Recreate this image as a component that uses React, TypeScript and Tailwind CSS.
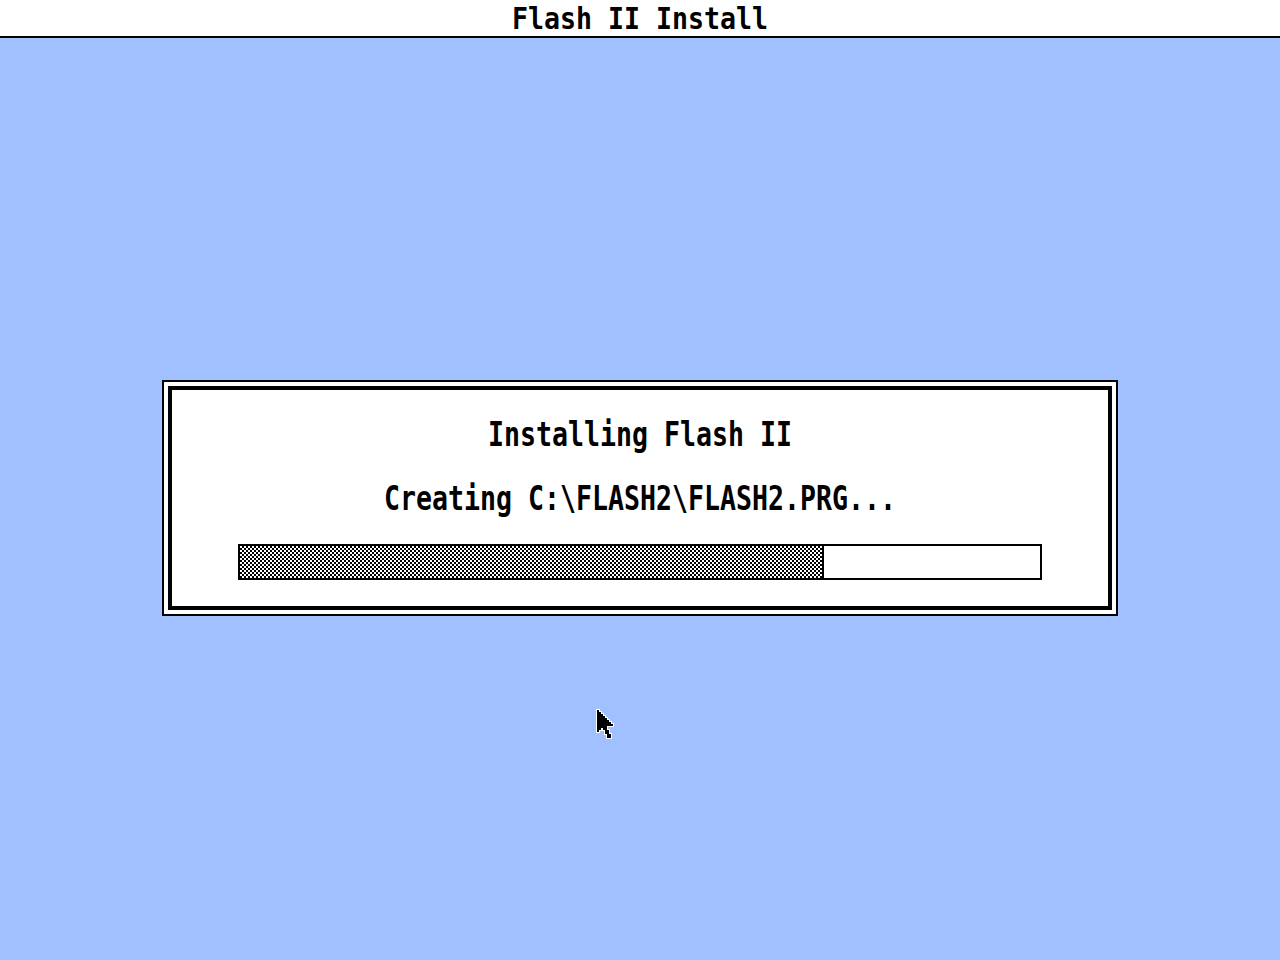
import React from "react";

function Cursor() {
  const cells: [number, number][] = [
    [0, 0], [1, 0], [1, 1], [2, 1], [2, 2], [3, 2], [3, 3], [4, 3], [4, 4], [5, 4], [5, 5], [6, 5], [6, 6], [7, 6], [7, 7], [8, 7], [8, 8],
    [5, 8], [5, 10], [6, 10], [6, 12], [7, 12], [7, 14], [5, 14], [5, 12], [4, 12], [4, 10], [3, 10], [3, 9], [2, 9], [2, 10], [1, 10], [1, 11], [0, 11],
  ];
  const pts = cells.map(([c, r]) => `${3 + 2 * c},${4 + 2 * r}`).join(" ");
  return (
    <svg
      className="absolute left-[594px] top-[706px]"
      width="24"
      height="36"
      viewBox="0 0 24 36"
      shapeRendering="crispEdges"
    >
      <polygon points={pts} fill="#000" stroke="#fff" strokeWidth="2" strokeLinejoin="miter" paintOrder="stroke" />
    </svg>
  );
}

function Line({ children, title = false }: { children: React.ReactNode; title?: boolean }) {
  return (
    <div
      className={
        title
          ? "h-[32px] text-center text-[26.58px] leading-[32px] font-bold text-black font-['DejaVu_Sans_Mono',monospace] whitespace-pre scale-y-[1.13]"
          : "h-[32px] text-center text-[26.58px] leading-[32px] font-bold text-black font-['DejaVu_Sans_Mono',monospace] whitespace-pre scale-y-[1.24]"
      }
    >
      {children}
    </div>
  );
}

export default function App() {
  return (
    <div className="relative w-[1280px] h-[960px] flex flex-col bg-[#a0c0ff] overflow-hidden">
      <div className="h-[38px] bg-white border-b-2 border-black pt-[3px] shrink-0">
        <Line title>Flash II Install</Line>
      </div>
      <div className="flex-1 flex items-center justify-center pb-[2px]">
        <div className="w-[956px] h-[236px] border-2 border-black bg-white p-[4px]">
          <div className="w-full h-full border-4 border-black bg-white flex flex-col pt-[29px]">
            <Line>Installing Flash II</Line>
            <div className="mt-[32px]">
              <Line>{"Creating C:\\FLASH2\\FLASH2.PRG..."}</Line>
            </div>
            <div className="mt-[29px] mx-auto w-[804px] h-[36px] border-2 border-black bg-white">
              <div className="h-full w-[584px] border-r-2 border-black bg-[conic-gradient(#000_90deg,#fff_90deg_180deg,#000_180deg_270deg,#fff_270deg)] bg-[length:4px_4px]" />
            </div>
          </div>
        </div>
      </div>
      <Cursor />
    </div>
  );
}
